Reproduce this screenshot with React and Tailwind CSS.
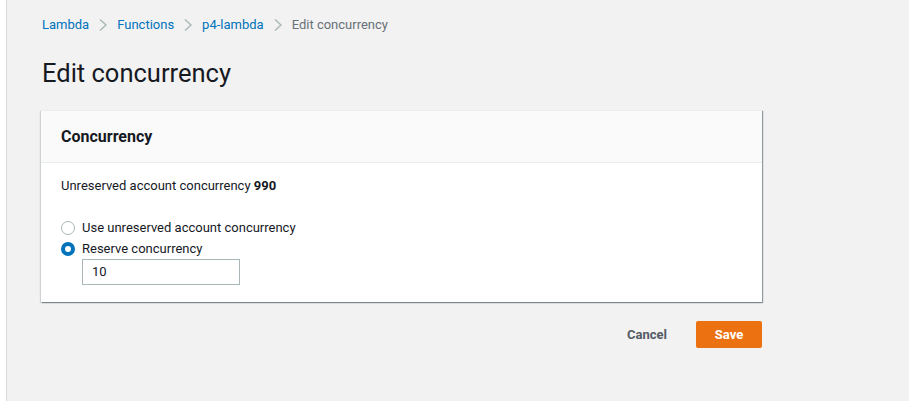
export default function App() {
  const font = { fontFamily: 'Roboto, "Noto Sans", Arial, sans-serif' };
  const Chev = () => (
    <svg width="10" height="14" viewBox="0 0 10 14" className="mx-[9px]">
      <path d="M2 1.5 L8 7 L2 12.5" fill="none" stroke="#aab7b8" strokeWidth="1.4" />
    </svg>
  );
  return (
    <div className="flex w-[909px] h-[401px] bg-white" style={font}>
      <div className="w-[6px] bg-white" />
      <div className="w-px bg-[#d5dbdb]" />
      <div className="flex-1 bg-[#f2f2f2] pl-[34px] pt-[15px]">
        <div className="flex items-center h-[20px] text-[13px] pl-px">
          <span className="text-[#0073bb]">Lambda</span>
          <Chev />
          <span className="text-[#0073bb]">Functions</span>
          <Chev />
          <span className="text-[#0073bb]">p4-lambda</span>
          <Chev />
          <span className="text-[#687078]">Edit concurrency</span>
        </div>
        <h1 className="mt-[23px] pl-px text-[25.5px] leading-[30px] text-[#16191f]">Edit concurrency</h1>
        <div className="mt-[22px] w-[721px] bg-white shadow-[1px_1px_1px_0_rgba(0,28,36,0.3),1px_1px_1px_0_rgba(0,28,36,0.15),-1px_1px_1px_0_rgba(0,28,36,0.15)] border-t border-[#eaeded]">
          <div className="h-[52px] bg-[#fafafa] border-b border-[#eaeded] flex items-center px-[20px]">
            <span className="text-[16px] font-bold text-[#16191f]">Concurrency</span>
          </div>
          <div className="px-[20px] pt-[13px] pb-[17px] text-[13px] text-[#16191f]">
            <div className="leading-[20px]">
              Unreserved account concurrency <span className="font-bold">990</span>
            </div>
            <div className="mt-[21px] flex items-center h-[21px]">
              <span className="w-[14px] h-[14px] rounded-full border border-[#aab7b8] bg-white mr-[7px]" />
              <span>Use unreserved account concurrency</span>
            </div>
            <div className="flex items-center h-[21px]">
              <span className="w-[14px] h-[14px] rounded-full border-[4px] border-[#0073bb] bg-white mr-[7px]" />
              <span>Reserve concurrency</span>
            </div>
            <div className="ml-[21px] w-[158px] h-[26px] border border-[#aab7b8] bg-white flex items-center px-[9px]">
              10
            </div>
          </div>
        </div>
        <div className="w-[721px] flex justify-end items-center mt-[19px]">
          <span className="text-[13px] font-bold text-[#545b64] mr-[29px]">Cancel</span>
          <button className="w-[66px] h-[27px] bg-[#ec7211] rounded-[2px] text-white text-[13px] font-bold">Save</button>
        </div>
      </div>
    </div>
  );
}
